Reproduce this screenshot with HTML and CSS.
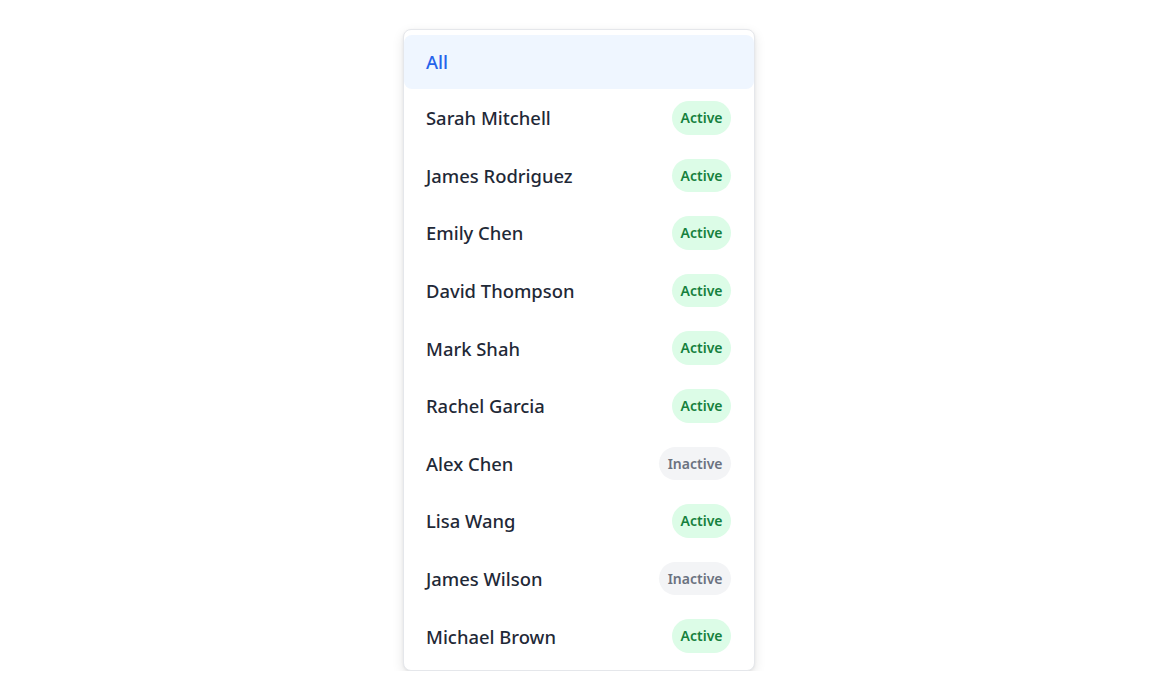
FILE: index.html
```html
<!DOCTYPE html>
<html lang="en">
<head>
<meta charset="utf-8">
<title>Filter</title>
<link rel="stylesheet" href="styles.css">
</head>
<body>
<ul class="menu">
  <li class="option selected"><span class="name">All</span></li>
  <li class="option"><span class="name">Sarah Mitchell</span><span class="badge active">Active</span></li>
  <li class="option"><span class="name">James Rodriguez</span><span class="badge active">Active</span></li>
  <li class="option"><span class="name">Emily Chen</span><span class="badge active">Active</span></li>
  <li class="option"><span class="name">David Thompson</span><span class="badge active">Active</span></li>
  <li class="option"><span class="name">Mark Shah</span><span class="badge active">Active</span></li>
  <li class="option"><span class="name">Rachel Garcia</span><span class="badge active">Active</span></li>
  <li class="option"><span class="name">Alex Chen</span><span class="badge inactive">Inactive</span></li>
  <li class="option"><span class="name">Lisa Wang</span><span class="badge active">Active</span></li>
  <li class="option"><span class="name">James Wilson</span><span class="badge inactive">Inactive</span></li>
  <li class="option"><span class="name">Michael Brown</span><span class="badge active">Active</span></li>
</ul>
</body>
</html>
```
FILE: styles.css
```css
html, body {
  margin: 0;
  padding: 0;
  background: #ffffff;
}
body {
  font-family: "Noto Sans", "Open Sans", sans-serif;
  color: #1f2937;
}
.menu {
  list-style: none;
  box-sizing: border-box;
  width: 352px;
  margin: 29px 0 0 calc(50% - 177px);
  padding: 5px 0;
  background: #ffffff;
  border: 1px solid #e5e7eb;
  border-radius: 8px;
  box-shadow: 0 4px 12px rgba(0, 0, 0, 0.10), 0 1px 3px rgba(0, 0, 0, 0.06);
}
.option {
  display: flex;
  align-items: center;
  justify-content: space-between;
  padding: 12px 23px 12px 22px;
  font-size: 18.4px;
  line-height: 27px;
  font-weight: 500;
  border-radius: 8px;
}
.option.selected {
  padding-top: 13px;
  padding-bottom: 14px;
  background: #eff6ff;
  color: #2563eb;
}
.badge {
  padding: 6px 8.5px;
  font-size: 14px;
  line-height: 21.6px;
  font-weight: 600;
  border-radius: 999px;
}
.badge.active {
  background: #dcfce7;
  color: #15803d;
}
.badge.inactive {
  background: #f3f4f6;
  color: #6b7280;
}
```
